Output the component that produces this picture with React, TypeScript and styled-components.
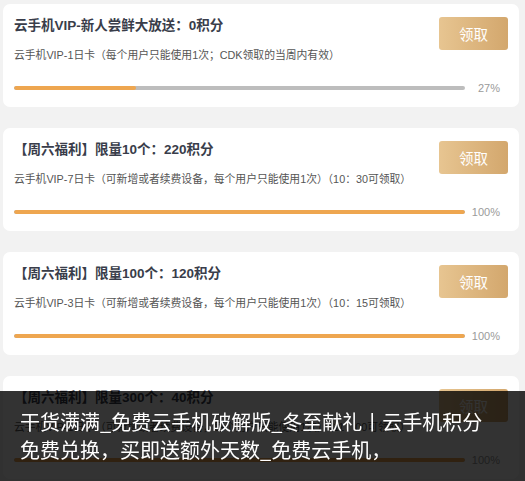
import React from 'react';
import styled, { createGlobalStyle } from 'styled-components';

const GlobalStyle = createGlobalStyle`
  html, body {
    margin: 0;
    padding: 0;
    background: #f2f2f2;
  }
  body {
    font-family: "Liberation Sans", "Noto Sans CJK SC", sans-serif;
  }
`;

const List = styled.div`
  display: flex;
  flex-direction: column;
  gap: 21px;
  padding: 4px 6px 20px 3px;
`;

const Card = styled.div`
  background: #ffffff;
  border-radius: 7px;
  padding: 13px 11px 11px;
`;

const Header = styled.div`
  display: flex;
  justify-content: space-between;
  align-items: flex-start;
`;

const Info = styled.div`
  display: flex;
  flex-direction: column;
`;

const Title = styled.div`
  font-size: 13.5px;
  line-height: 18px;
  font-weight: 700;
  color: #393d4a;
`;

const Desc = styled.div`
  margin-top: 12px;
  font-size: 10.8px;
  line-height: 16px;
  color: #555555;
`;

const GetButton = styled.button`
  width: 69px;
  height: 33px;
  border: 0;
  border-radius: 3px;
  background: linear-gradient(90deg, #e7c591 0%, #d3a76d 100%);
  color: #ffffff;
  font-family: "Liberation Sans", "Noto Sans CJK SC", sans-serif;
  font-size: 14.5px;
  padding: 0;
`;

const ProgressRow = styled.div`
  display: flex;
  align-items: center;
  margin-top: 17px;
  height: 16px;
  padding-right: 8px;
`;

const Track = styled.div`
  flex: 1;
  height: 4px;
  border-radius: 2px;
  background: #bdbdbd;
  overflow: hidden;
`;

const Fill = styled.div`
  height: 100%;
  border-radius: 2px;
  background: #eea650;
`;

const Percent = styled.span`
  width: 35px;
  text-align: right;
  font-size: 11px;
  color: #9a9a9a;
`;

const Banner = styled.div`
  position: fixed;
  left: 0;
  right: 0;
  bottom: 0;
  height: 90px;
  box-sizing: border-box;
  padding: 17px 20px;
  background: rgba(0, 0, 0, 0.8);
  color: #ffffff;
  font-family: "Noto Sans CJK SC", sans-serif;
  font-size: 20px;
  line-height: 28px;
`;

const items = [
  {
    title: '云手机VIP-新人尝鲜大放送：0积分',
    desc: '云手机VIP-1日卡（每个用户只能使用1次；CDK领取的当周内有效）',
    percent: 27,
  },
  {
    title: '【周六福利】限量10个：220积分',
    desc: '云手机VIP-7日卡（可新增或者续费设备，每个用户只能使用1次）（10：30可领取）',
    percent: 100,
  },
  {
    title: '【周六福利】限量100个：120积分',
    desc: '云手机VIP-3日卡（可新增或者续费设备，每个用户只能使用1次）（10：15可领取）',
    percent: 100,
  },
  {
    title: '【周六福利】限量300个：40积分',
    desc: '云手机VIP-1日卡（可新增或者续费设备，每个用户只能使用1次）（11：00可领取）',
    percent: 100,
  },
];

export default function App() {
  return (
    <>
      <GlobalStyle />
      <List>
        {items.map((item) => (
          <Card key={item.title}>
            <Header>
              <Info>
                <Title>{item.title}</Title>
                <Desc>{item.desc}</Desc>
              </Info>
              <GetButton>领取</GetButton>
            </Header>
            <ProgressRow>
              <Track>
                <Fill style={{ width: `${item.percent}%` }} />
              </Track>
              <Percent>{item.percent}%</Percent>
            </ProgressRow>
          </Card>
        ))}
      </List>
      <Banner>
        干货满满_免费云手机破解版_冬至献礼丨云手机积分
        <br />
        免费兑换，买即送额外天数_免费云手机，
      </Banner>
    </>
  );
}
